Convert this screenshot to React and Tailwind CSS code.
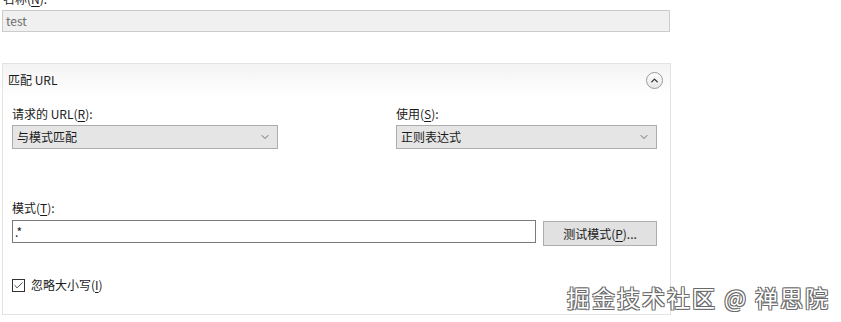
import { Check, ChevronDown, ChevronUp } from "lucide-react";

const font = { fontFamily: '"Noto Sans CJK SC", "Noto Sans", sans-serif' };

function Key({ children }) {
  return <span className="underline underline-offset-2">{children}</span>;
}

function Select({ value, className }) {
  return (
    <div
      className={`flex h-[24px] items-center justify-between border border-[#adadad] bg-[#e5e5e5] pl-[4px] pr-[6px] text-[12px] text-[#1a1a1a] ${className}`}
    >
      <span>{value}</span>
      <ChevronDown size={12} strokeWidth={1.5} className="text-[#444]" />
    </div>
  );
}

export default function App() {
  return (
    <div className="h-[322px] w-[841px] overflow-hidden bg-white text-[12px] text-[#1a1a1a]" style={font}>
      <div className="relative w-[670px] pl-[2px]">
        <div className="h-[10px] overflow-hidden">
          <div className="-mt-[9px] pl-[1px] leading-[16px]">
            名称(<Key>N</Key>):
          </div>
        </div>
        <div className="flex h-[22px] items-center border border-[#cccccc] bg-[#f0f0f0] pl-[3px] text-[#6d6d6d]">
          test
        </div>
      </div>

      <section className="ml-[2px] mt-[31px] flex h-[252px] w-[669px] flex-col border border-[#e3e3e3]">
        <div className="flex h-[32px] items-center justify-between bg-gradient-to-b from-[#f3f3f3] to-white pl-[5px] pr-[7px]">
          <span className="text-[12px]">匹配 URL</span>
          <span className="flex h-[17px] w-[17px] items-center justify-center rounded-full border border-[#9a9a9a] bg-gradient-to-b from-white to-[#e6e6e6]">
            <ChevronUp size={11} strokeWidth={3} className="text-[#333]" />
          </span>
        </div>

        <div className="flex flex-col pl-[9px] pr-[13px]">
          <div className="mt-[9px] flex justify-between">
            <div className="flex w-[266px] flex-col">
              <span className="leading-[18px]">
                请求的 URL(<Key>R</Key>):
              </span>
              <Select value="与模式匹配" className="mt-[2px] w-[266px]" />
            </div>
            <div className="flex w-[261px] flex-col">
              <span className="leading-[18px]">
                使用(<Key>S</Key>):
              </span>
              <Select value="正则表达式" className="mt-[2px] w-[261px]" />
            </div>
          </div>

          <span className="mt-[50px] leading-[18px]">
            模式(<Key>T</Key>):
          </span>
          <div className="mt-[3px] flex items-start justify-between">
            <div className="flex h-[23px] w-[524px] items-center border border-[#7a7a7a] bg-white pl-[2px]">.*</div>
            <button className="mt-[1px] h-[25px] w-[114px] border border-[#adadad] bg-[#e1e1e1] text-[12px]">
              测试模式(<Key>P</Key>)...
            </button>
          </div>

          <label className="mt-[30px] flex items-center gap-[6px]">
            <span className="flex h-[13px] w-[13px] items-center justify-center border border-[#333] bg-white">
              <Check size={11} strokeWidth={2} className="text-[#333]" />
            </span>
            <span>
              忽略大小写(<Key>I</Key>)
            </span>
          </label>
        </div>
      </section>

      <div
        className="absolute left-[567px] top-[280px] text-[23px] tracking-[2px] text-white"
        style={{
          ...font,
          textShadow:
            "1px 1px 0 #6a6a6a, -1px -1px 0 #6a6a6a, 1px -1px 0 #6a6a6a, -1px 1px 0 #6a6a6a",
        }}
      >
        掘金技术社区 @ 禅思院
      </div>
    </div>
  );
}
